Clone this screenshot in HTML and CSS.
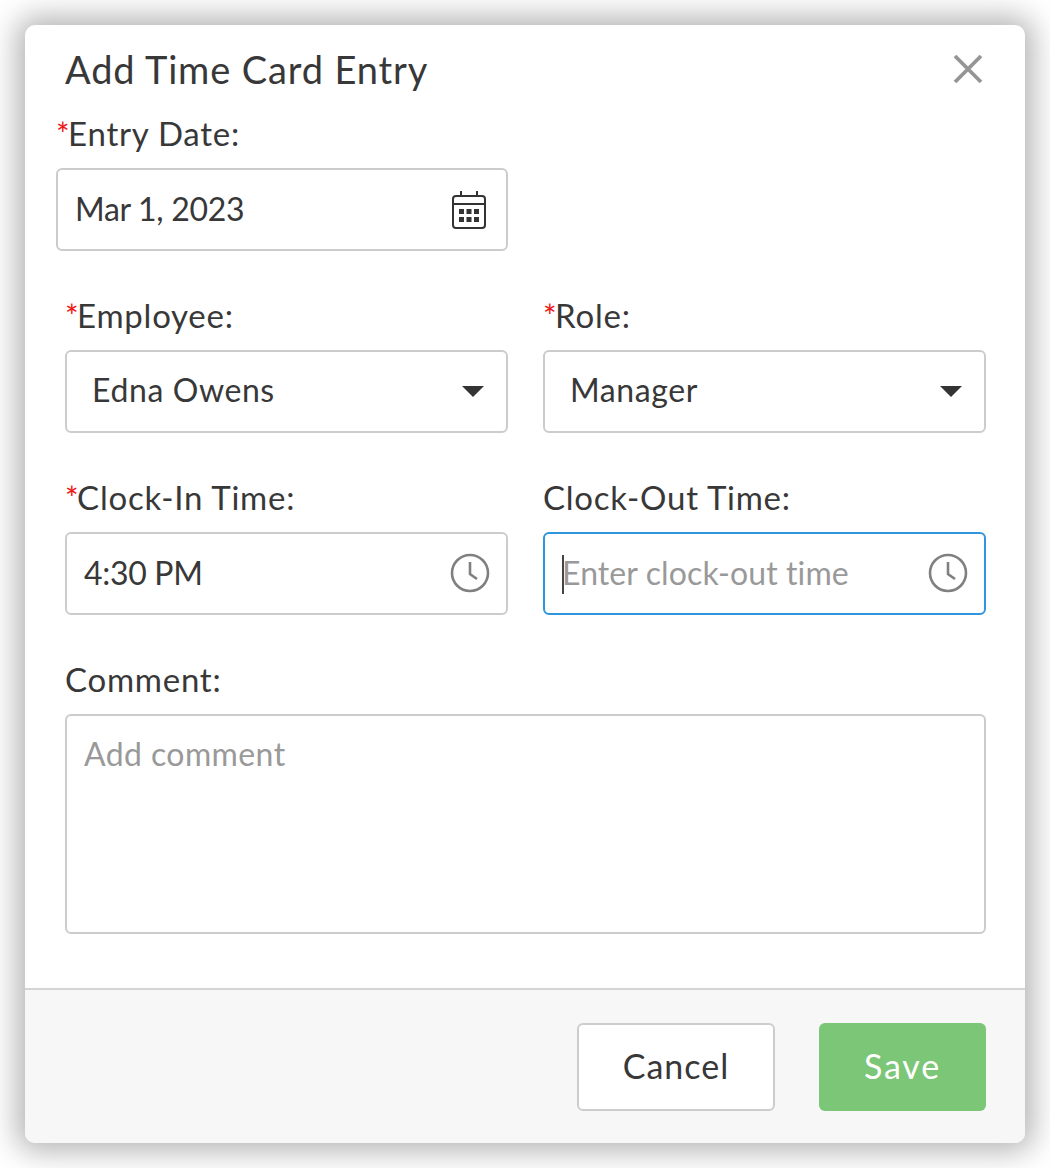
FILE: index.html
```html
<!DOCTYPE html>
<html lang="en">
<head>
    <meta charset="UTF-8">
    <meta name="viewport" content="width=device-width, initial-scale=1.0">
    <title>Add Time Card Entry</title>
    <link rel="stylesheet" href="styles.css">
</head>
<body>
    <div class="dialog">
        <div class="dialog-header">
            <h2>Add Time Card Entry</h2>
            <svg class="close-icon" width="32" height="32" viewBox="0 0 32 32">
                <path d="M3 3L29 29M29 3L3 29" fill="none" stroke="#959595" stroke-width="3.800"/>
            </svg>
        </div>

        <div class="dialog-body">
            <div class="form-group date-group">
                <label><span class="req">*</span>Entry Date:</label>
                <div class="field">
                    <span class="value digits">Mar 1, 2023</span>
                    <svg class="field-icon" width="36" height="40" viewBox="0 0 36 40">
                        <rect x="2" y="6" width="32" height="32" rx="3" fill="none" stroke="#333" stroke-width="2"/>
                        <path d="M2 14H34M10 1V6M26 1V6" fill="none" stroke="#333" stroke-width="2"/>
                        <path d="M8 19h5v5H8zM15.500 19h5v5h-5zM23 19h5v5h-5zM8 27h5v5H8zM15.500 27h5v5h-5zM23 27h5v5h-5z" fill="#333"/>
                    </svg>
                </div>
            </div>

            <div class="form-row">
                <div class="form-group">
                    <label><span class="req">*</span>Employee:</label>
                    <div class="field select">
                        <span class="value">Edna Owens</span>
                        <span class="caret"></span>
                    </div>
                </div>
                <div class="form-group">
                    <label><span class="req">*</span>Role:</label>
                    <div class="field select">
                        <span class="value">Manager</span>
                        <span class="caret"></span>
                    </div>
                </div>
            </div>

            <div class="form-row">
                <div class="form-group">
                    <label><span class="req">*</span>Clock-In Time:</label>
                    <div class="field time">
                        <span class="value digits">4:30 PM</span>
                        <svg class="field-icon" width="40" height="40" viewBox="0 0 40 40">
                            <circle cx="20" cy="20" r="18" fill="none" stroke="#808080" stroke-width="2.600"/>
                            <path d="M20 9V21L27 26" fill="none" stroke="#808080" stroke-width="2.600"/>
                        </svg>
                    </div>
                </div>
                <div class="form-group">
                    <label>Clock-Out Time:</label>
                    <div class="field time focused">
                        <span class="cursor"></span>
                        <span class="value placeholder tight">Enter clock-out time</span>
                        <svg class="field-icon" width="40" height="40" viewBox="0 0 40 40">
                            <circle cx="20" cy="20" r="18" fill="none" stroke="#808080" stroke-width="2.600"/>
                            <path d="M20 9V21L27 26" fill="none" stroke="#808080" stroke-width="2.600"/>
                        </svg>
                    </div>
                </div>
            </div>

            <div class="form-group">
                <label>Comment:</label>
                <div class="textarea"><span class="placeholder">Add comment</span></div>
            </div>
        </div>

        <div class="dialog-footer">
            <button class="btn btn-cancel">Cancel</button>
            <button class="btn btn-save">Save</button>
        </div>
    </div>
</body>
</html>
```

FILE: styles.css
```css
html, body {
    margin: 0;
    height: 100%;
    background-color: #fff;
}

body {
    font-family: Lato, "Noto Sans", sans-serif;
    color: #383838;
    font-size: 32px;
    padding: 25px;
    box-sizing: border-box;
    overflow: hidden;
}

.dialog {
    width: 1000px;
    height: 1118px;
    background-color: #fff;
    border-radius: 10px;
    box-shadow: 0 0 30px 8px rgba(0, 0, 0, 0.3);
    display: flex;
    flex-direction: column;
}

.dialog-header {
    height: 90px;
    padding: 0 41px 2px 40px;
    box-sizing: border-box;
    display: flex;
    justify-content: space-between;
    align-items: center;
}

.dialog-header h2 {
    margin: 0;
    font-size: 38px;
    font-weight: 400;
    letter-spacing: 0.87px;
}

.dialog-body {
    flex: 1;
    padding: 0 39px 0 40px;
}

.form-row {
    display: grid;
    grid-template-columns: 443px 443px;
    column-gap: 35px;
}

.form-group {
    margin-bottom: 46px;
}

.date-group {
    margin-left: -9px;
    width: 452px;
}

.form-group label {
    display: block;
    height: 38px;
    line-height: 36px;
    margin-bottom: 15px;
    font-size: 33px;
    letter-spacing: 0.75px;
}

.req {
    color: #f01414;
    font-size: 32px;
    letter-spacing: -1.500px;
}

.field {
    height: 83px;
    box-sizing: border-box;
    border: 2px solid #ccc;
    border-radius: 6px;
    padding: 0 19px 0 17px;
    display: flex;
    align-items: center;
    justify-content: space-between;
    background-color: #fff;
}

.time {
    padding-right: 16px;
}

.time .field-icon {
    margin-top: -2px;
}

.select {
    padding-left: 25px;
    padding-right: 22px;
}

.value {
    letter-spacing: 0.6px;
    padding-bottom: 5px;
}

.digits {
    letter-spacing: -0.3px;
    padding-bottom: 3px;
}

.tight {
    letter-spacing: 0.1px;
    padding-bottom: 3px;
}

.focused {
    border-color: #2f95dc;
    position: relative;
}

.cursor {
    position: absolute;
    left: 17px;
    top: 21px;
    width: 2px;
    height: 39px;
    background-color: #444;
}

.placeholder {
    color: #999;
}

.caret {
    width: 0;
    height: 0;
    border-left: 11px solid transparent;
    border-right: 11px solid transparent;
    border-top: 11px solid #333;
}

.textarea {
    height: 220px;
    box-sizing: border-box;
    border: 2px solid #ccc;
    border-radius: 6px;
    padding: 19px 17px;
    line-height: 38px;
    letter-spacing: 0.4px;
}

.dialog-footer {
    height: 155px;
    box-sizing: border-box;
    border-top: 2px solid #d4d4d4;
    background-color: #f7f7f7;
    border-radius: 0 0 10px 10px;
    padding: 33px 39px 0 0;
    display: flex;
    justify-content: flex-end;
    gap: 44px;
}

.btn {
    height: 88px;
    padding: 0 0 4px;
    border-radius: 6px;
    font-family: inherit;
    font-size: 34px;
    cursor: pointer;
}

.btn-cancel {
    width: 198px;
    background-color: #fff;
    border: 2px solid #ccc;
    color: #383838;
    letter-spacing: 1px;
}

.btn-save {
    width: 167px;
    background-color: #7bc677;
    border: none;
    color: #fff;
    letter-spacing: 1.800px;
}
```
